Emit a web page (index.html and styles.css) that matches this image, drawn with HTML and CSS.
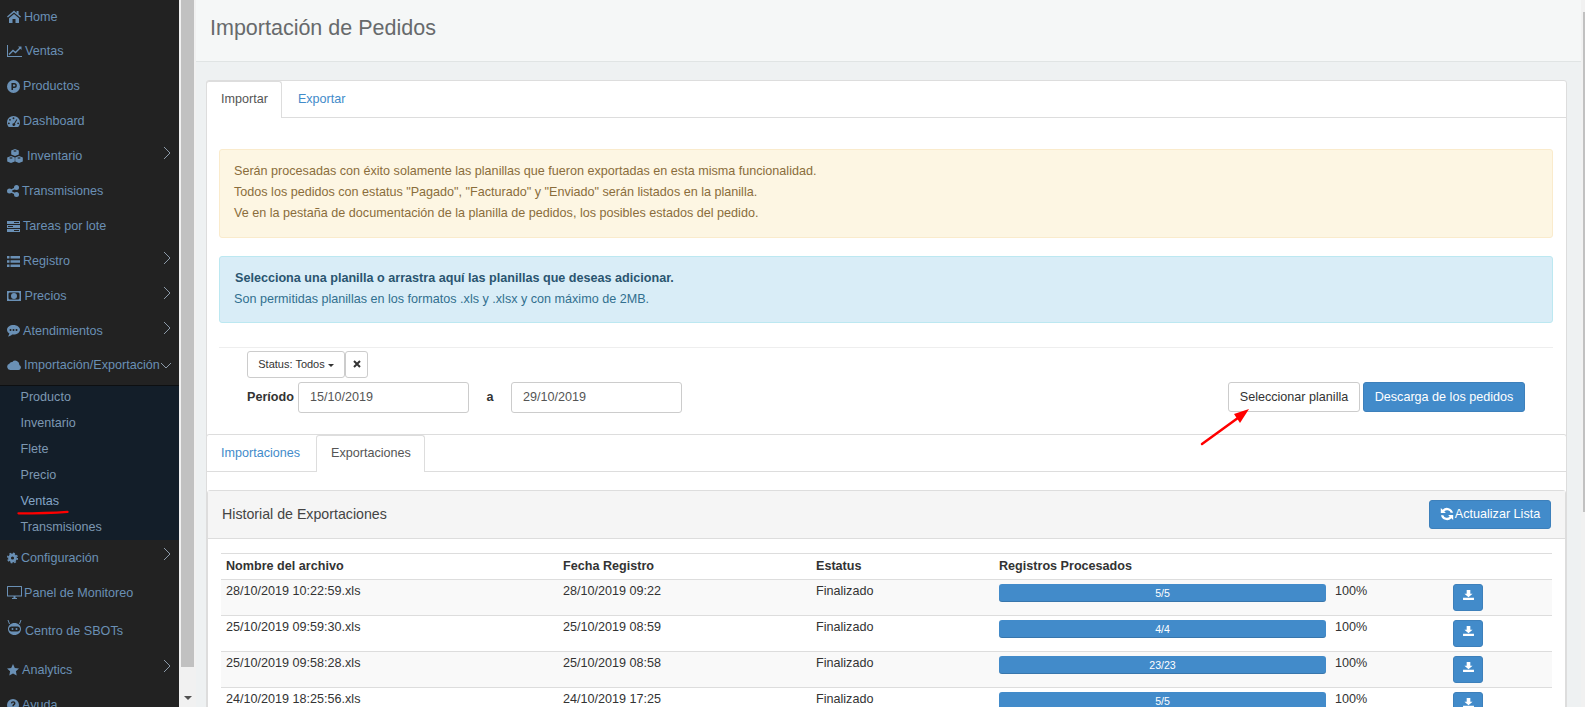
FILE: index.html
```html
<!DOCTYPE html>
<html lang="es">
<head>
<meta charset="utf-8">
<title>Importación de Pedidos</title>
<link rel="stylesheet" href="styles.css">
</head>
<body>
<nav class="sidebar">
  <a class="item item-first"><svg class="ico" width="14" height="13" viewBox="0 0 14 13"><path d="M7 .5 0 6.600l.9 1L7 2.400l6.100 5.200.9-1-2.400-2.100V1h-2v1.900zM2 8.200 7 3.900l5 4.300V13H8.500V9h-3v4H2z"/></svg><span>Home</span></a>
  <a class="item"><svg class="ico" width="15" height="12" viewBox="0 0 15 12"><path d="M0 0h1v11h14v1H0z"/><path class="line" d="M2 9.500 6 5.500l2.500 2L13.500 2.500"/><path d="M11 1.500h3.500V5z"/></svg><span>Ventas</span></a>
  <a class="item"><svg class="ico" width="13" height="13" viewBox="0 0 14 14"><path fill-rule="evenodd" d="M7 0a7 7 0 1 0 0 14A7 7 0 0 0 7 0zM4.800 3.300h3.100a2.700 2.700 0 0 1 0 5.400H6.500v2.100H4.800zm1.700 1.600v2.200h1.400a1.100 1.100 0 0 0 0-2.200z"/></svg><span>Productos</span></a>
  <a class="item"><svg class="ico" width="13" height="13" viewBox="0 0 14 14"><path fill-rule="evenodd" d="M7 1a7 7 0 0 0-7 7c0 1.900.7 3.600 1.900 4.900h10.200A7 7 0 0 0 14 8a7 7 0 0 0-7-7zM7 2.500a1 1 0 1 1 0 2 1 1 0 0 1 0-2zM3.200 4.200a1 1 0 1 1 0 2 1 1 0 0 1 0-2zM2 8a1 1 0 1 1 0 2 1 1 0 0 1 0-2zm10 0a1 1 0 1 1 0 2 1 1 0 0 1 0-2zM10.200 4.500l.9.500-2.600 4.300a1.500 1.500 0 1 1-.9-.500z"/></svg><span>Dashboard</span></a>
  <a class="item"><svg class="ico" width="16" height="15" viewBox="0 0 16 15"><path fill-rule="evenodd" d="M8 0l3.800 1.400v4.200L8 7 4.200 5.600V1.400zM8 1.300 6 2l2 .8 2-.8zM4 7l3.800 1.400v4.200L4 14 .2 12.600V8.400zM4 8.300 2 9l2 .8L6 9zM12 7l3.800 1.400v4.200L12 14l-3.800-1.400V8.400zM12 8.300 10 9l2 .8 2-.8z"/></svg><span class="t1">Inventario</span><svg class="chev" width="8" height="14" viewBox="0 0 8 14"><path d="M1 1l6 6-6 6"/></svg></a>
  <a class="item"><svg class="ico" width="12" height="12" viewBox="0 0 12 12"><circle cx="2.500" cy="6" r="2.500"/><circle cx="9.500" cy="2.500" r="2.500"/><circle cx="9.500" cy="9.500" r="2.500"/><path class="line" d="M9.500 2.500 2.500 6l7 3.500"/></svg><span>Transmisiones</span></a>
  <a class="item"><svg class="ico" width="13" height="11" viewBox="0 0 13 11"><path d="M0 0h13v3H0zM0 4h13v3H0zM0 8h13v3H0z"/><path class="dim" d="M7 1h5v1H7zM1 5h5v1H1zM7 9h5v1H7z"/></svg><span>Tareas por lote</span></a>
  <a class="item"><svg class="ico" width="13" height="11" viewBox="0 0 13 11"><path d="M0 0h2.500v2.500H0zM0 4.250h2.500v2.500H0zM0 8.500h2.500V11H0zM3.500 0H13v2.400H3.500zM3.500 4.300H13v2.400H3.500zM3.500 8.600H13V11H3.500z"/></svg><span>Registro</span><svg class="chev" width="8" height="14" viewBox="0 0 8 14"><path d="M1 1l6 6-6 6"/></svg></a>
  <a class="item"><svg class="ico" width="14" height="10" viewBox="0 0 14 10"><path fill-rule="evenodd" d="M0 0h14v10H0zM2.500 1.500 1.500 2.500v5l1 1h9l1-1v-5l-1-1zM7 2a3 3 0 1 1 0 6 3 3 0 0 1 0-6z"/></svg><span class="t0b">Precios</span><svg class="chev" width="8" height="14" viewBox="0 0 8 14"><path d="M1 1l6 6-6 6"/></svg></a>
  <a class="item"><svg class="ico" width="13" height="12" viewBox="0 0 13 12"><path fill-rule="evenodd" d="M6.500 0C2.900 0 0 2.100 0 4.800c0 1.500.9 2.900 2.400 3.800-.2.900-.8 2-1.400 2.900 1.700-.2 3.100-1.100 4.100-2 .5.100.9.100 1.400.100 3.600 0 6.500-2.200 6.500-4.800S10.100 0 6.500 0zM3.500 4a1 1 0 1 1 0 2 1 1 0 0 1 0-2zm3 0a1 1 0 1 1 0 2 1 1 0 0 1 0-2zm3 0a1 1 0 1 1 0 2 1 1 0 0 1 0-2z"/></svg><span>Atendimientos</span><svg class="chev" width="8" height="14" viewBox="0 0 8 14"><path d="M1 1l6 6-6 6"/></svg></a>
  <a class="item item-open"><svg class="ico" width="14" height="10" viewBox="0 0 14 10"><path d="M3.200 10A3.200 3.200 0 0 1 2.300 3.800 3 3 0 0 1 5.300 2 4 4 0 0 1 12.300 5 2.600 2.600 0 0 1 11.200 10z"/></svg><span>Importación/Exportación</span><svg class="chev chev-down" width="12" height="7" viewBox="0 0 12 7"><path d="M1 1l5 5 5-5"/></svg></a>
  <div class="submenu">
    <a class="sub">Producto</a>
    <a class="sub">Inventario</a>
    <a class="sub">Flete</a>
    <a class="sub">Precio</a>
    <a class="sub sub-on">Ventas<svg class="underline" width="52" height="5" viewBox="0 0 52 5"><path d="M1.500 3.300C18 3.300 34 3 50.500 1.800"/></svg></a>
    <a class="sub">Transmisiones</a>
  </div>
  <a class="item"><svg class="ico" width="11" height="12" viewBox="0 0 12 12"><circle class="teeth" cx="6" cy="6" r="5.200"/><path fill-rule="evenodd" d="M6 1.200a4.800 4.800 0 1 1 0 9.600 4.800 4.800 0 0 1 0-9.600zM6 4.300a1.700 1.700 0 1 0 0 3.400 1.700 1.700 0 0 0 0-3.400z"/></svg><span>Configuración</span><svg class="chev" width="8" height="14" viewBox="0 0 8 14"><path d="M1 1l6 6-6 6"/></svg></a>
  <a class="item"><svg class="ico" width="15" height="13" viewBox="0 0 15 13"><path fill-rule="evenodd" d="M0 .500A.5.5 0 0 1 .5 0h14a.5.5 0 0 1 .5.500V10a.5.5 0 0 1-.5.500H.5A.5.5 0 0 1 0 10zM1 1v8.500h13V1zM6.500 10.500h2v1.500h1.500v1H5v-1h1.500z"/></svg><span class="t2">Panel de Monitoreo</span></a>
  <a class="item item-tall"><svg class="ico robot" width="15" height="16" viewBox="0 0 15 16"><path class="line thin" d="M1 0 2.500 4M14 0 12.500 4"/><path fill-rule="evenodd" d="M7.500 3C3.900 3 1 5.600 1 9s2.900 6 6.500 6 6.500-2.600 6.500-6-2.900-6-6.500-6zM4.500 6.500h6c1.400 0 2.500 1.100 2.500 2.500s-1.100 2.500-2.500 2.500h-6C3.100 11.500 2 10.400 2 9s1.100-2.500 2.500-2.500z"/><circle cx="5.500" cy="9" r="1"/><circle cx="9.500" cy="9" r="1"/></svg><span>Centro de SBOTs</span></a>
  <a class="item"><svg class="ico" width="12" height="12" viewBox="0 0 12 12"><path d="M6 0l1.800 3.900 4.200.5-3.100 2.900.8 4.200L6 9.400l-3.700 2.100.8-4.200L0 4.400l4.200-.5z"/></svg><span>Analytics</span><svg class="chev" width="8" height="14" viewBox="0 0 8 14"><path d="M1 1l6 6-6 6"/></svg></a>
  <a class="item"><svg class="ico" width="12" height="12" viewBox="0 0 12 12"><path fill-rule="evenodd" d="M6 0a6 6 0 1 0 0 12A6 6 0 0 0 6 0zM3.800 4.300C4 3 5 2.300 6.200 2.300c1.300 0 2.300.9 2.300 2 0 1.900-1.700 1.700-1.700 3H5.300c0-2.100 1.700-2 1.700-3 0-.5-.4-.8-.9-.8-.5 0-.9.300-1 .9zM5.300 8h1.500v1.500H5.300z"/></svg><span>Ayuda</span></a>
</nav>
<div class="scroll-side"><div class="thumb"></div><div class="scroll-arrow"></div></div>

<main class="main">
  <header class="page-head"><h1>Importación de Pedidos</h1></header>
  <div class="page-body">
    <section class="panel">
      <div class="tabs">
        <a class="tab tab-on tab-first">Importar</a>
        <a class="tab tab-after">Exportar</a>
      </div>
      <div class="tab-body">
        <div class="alert alert-warn">
          <p>Serán procesadas con éxito solamente las planillas que fueron exportadas en esta misma funcionalidad.</p>
          <p>Todos los pedidos con estatus "Pagado", "Facturado" y "Enviado" serán listados en la planilla.</p>
          <p>Ve en la pestaña de documentación de la planilla de pedidos, los posibles estados del pedido.</p>
        </div>
        <div class="alert alert-info">
          <p><strong>Selecciona una planilla o arrastra aquí las planillas que deseas adicionar.</strong></p>
          <p>Son permitidas planillas en los formatos .xls y .xlsx y con máximo de 2MB.</p>
        </div>
        <hr class="rule">
        <div class="filters">
          <div class="status-row">
            <button class="btn btn-xs">Status: <span class="status-val">Todos</span><i class="caret"></i></button>
            <button class="btn btn-x"><svg width="8" height="8" viewBox="0 0 8 8"><path d="M1 1l6 6M7 1 1 7"/></svg></button>
          </div>
          <div class="period-row">
            <label class="lbl">Período</label>
            <input class="date" value="15/10/2019" readonly>
            <span class="sep">a</span>
            <input class="date" value="29/10/2019" readonly>
            <div class="actions">
              <button class="btn btn-default">Seleccionar planilla<svg class="arrow" width="60" height="42" viewBox="0 0 60 42"><path class="arrow-shaft" d="M6 38 46 9"/><path class="arrow-head" d="M53 3 38 8l6 9z"/></svg></button>
              <button class="btn btn-primary">Descarga de los pedidos</button>
            </div>
          </div>
        </div>
      </div>
      <section class="panel inner">
        <div class="tabs">
          <a class="tab tab-plain">Importaciones</a>
          <a class="tab tab-on tab-second">Exportaciones</a>
        </div>
        <div class="history">
          <div class="history-head">
            <span class="history-title">Historial de Exportaciones</span>
            <button class="btn btn-primary btn-refresh"><svg width="14" height="14" viewBox="0 0 14 14"><path d="M13 5.800h-2.300a3.800 3.800 0 0 0-6.400-1.300L5.900 6.100H.8V1l1.800 1.800a6.100 6.100 0 0 1 10.400 3zM1 8.200h2.300a3.800 3.800 0 0 0 6.400 1.300L8.100 7.900h5.100V13l-1.800-1.800A6.100 6.100 0 0 1 1 8.200z"/></svg>Actualizar Lista</button>
          </div>
          <div class="history-body">
            <table class="grid">
              <thead>
                <tr><th class="c1">Nombre del archivo</th><th class="c2">Fecha Registro</th><th class="c3">Estatus</th><th class="c4">Registros Procesados</th><th class="c5"></th><th class="c6"></th></tr>
              </thead>
              <tbody>
                <tr><td>28/10/2019 10:22:59.xls</td><td>28/10/2019 09:22</td><td>Finalizado</td><td><div class="bar">5/5</div></td><td class="pct">100%</td><td><button class="btn-dl"><svg width="11" height="10" viewBox="0 0 12 11"><path d="M4 0h4v4h2.500L6 8 1.500 4H4zM0 8.500h12V11H0z"/></svg></button></td></tr>
                <tr><td>25/10/2019 09:59:30.xls</td><td>25/10/2019 08:59</td><td>Finalizado</td><td><div class="bar">4/4</div></td><td class="pct">100%</td><td><button class="btn-dl"><svg width="11" height="10" viewBox="0 0 12 11"><path d="M4 0h4v4h2.500L6 8 1.500 4H4zM0 8.500h12V11H0z"/></svg></button></td></tr>
                <tr><td>25/10/2019 09:58:28.xls</td><td>25/10/2019 08:58</td><td>Finalizado</td><td><div class="bar">23/23</div></td><td class="pct">100%</td><td><button class="btn-dl"><svg width="11" height="10" viewBox="0 0 12 11"><path d="M4 0h4v4h2.500L6 8 1.500 4H4zM0 8.500h12V11H0z"/></svg></button></td></tr>
                <tr><td>24/10/2019 18:25:56.xls</td><td>24/10/2019 17:25</td><td>Finalizado</td><td><div class="bar">5/5</div></td><td class="pct">100%</td><td><button class="btn-dl"><svg width="11" height="10" viewBox="0 0 12 11"><path d="M4 0h4v4h2.500L6 8 1.500 4H4zM0 8.500h12V11H0z"/></svg></button></td></tr>
              </tbody>
            </table>
          </div>
        </div>
      </section>
    </section>
  </div>
</main>
<div class="scroll-page"><div class="page-thumb"></div></div>
</body>
</html>
```
FILE: styles.css
```css
* { box-sizing: border-box; }
html, body { height: 707px; margin: 0; overflow: hidden; }
body {
  display: flex;
  font-family: "Liberation Sans", Arial, sans-serif;
  font-size: 12.6px;
  line-height: 18px;
  color: #333;
  background: #eef1f2;
}
p { margin: 0; }

/* Sidebar */
.sidebar { width: 179px; height: 707px; flex: none; background: #222; overflow: hidden; color: #6a90b5; }
.item { display: flex; align-items: center; gap: 3px; height: 35px; padding: 0 8px 0 7px; white-space: nowrap; }
.item-first { height: 33.5px; }
.item-open { height: 36.5px; padding-bottom: 3px; }
.item-tall { height: 42px; }
.ico { flex: none; fill: currentColor; }
.ico .line { fill: none; stroke: currentColor; stroke-width: 1.4; }
.ico .thin { stroke-width: 1; }
.ico .dim { fill: #222; }
.ico .teeth { fill: none; stroke: currentColor; stroke-width: 1.700; stroke-dasharray: 2 2.080; }
.robot { margin-top: -6px; }
.t0b { margin-left: .5px; }
.t1 { margin-left: 1px; }
.t2 { margin-left: -1px; }
.chev { flex: none; margin-left: auto; margin-bottom: 7px; fill: none; stroke: #8c9aa8; stroke-width: 1; }
.chev-down { margin-bottom: 0; margin-left: -3px; }
.submenu { background: #131e29; box-shadow: inset 0 1px 0 #0d0f11; padding: 0; }
.sub { position: relative; display: block; height: 26px; line-height: 25px; padding-left: 20.5px; color: #7d98b2; }
.sub:last-child { height: 25px; }
.sub-on { color: #84a5c6; }
.underline { position: absolute; left: 17px; top: 21px; fill: none; stroke: #f00; stroke-width: 2.300; stroke-linecap: round; }

/* Scrollbars */
.scroll-side { width: 17px; flex: none; background: #f1f1f1; display: flex; flex-direction: column; align-items: center; justify-content: space-between; padding-bottom: 7px; }
.thumb { width: 13px; height: 667px; background: #c1c1c1; }
.scroll-arrow { width: 0; height: 0; border-left: 4px solid transparent; border-right: 4px solid transparent; border-top: 4px solid #505050; }
.scroll-page { width: 4px; flex: none; background: #f1f1f1; padding: 12px 0 0 2px; }
.page-thumb { width: 2px; height: 500px; background: #c1c1c1; }

/* Main */
.main { flex: 1; min-width: 0; height: 707px; overflow: hidden; }
.page-head { height: 62px; background: #f5f7f7; border-bottom: 1px solid #e0e4e4; padding: 16px 0 0 14px; }
h1 { margin: 0; font-size: 21.5px; font-weight: 400; line-height: 24px; color: #676a6c; }
.page-body { padding: 18px 14px 0 10px; }
.panel { background: #fff; border: 1px solid #ddd; border-radius: 3px; }
.inner { margin: 0 -1px; }

.tabs { display: flex; height: 37px; border-bottom: 1px solid #ddd; }
.tab { height: 37px; padding: 0 14px; line-height: 35px; color: #428bca; border: 1px solid transparent; border-bottom: 0; }
.tab-after { padding-left: 15px; }
.tab-plain { padding: 0 15px 0 13px; }
.tab-second { padding: 0 13px 0 14px; }
.tab-on { color: #555; background: #fff; border-color: #ddd; border-radius: 3px 3px 0 0; }
.tab-first { margin-left: -1px; padding: 0 13px 0 14px; border-left-color: #ddd; }

.tab-body { padding: 31px 13px 21px 12px; }
.alert { border: 1px solid; border-radius: 3px; line-height: 21.42px; padding: 10.5px 14px 12px; }
.alert-warn { background: #fdf6e3; border-color: #faebcc; color: #8a6d3b; margin-bottom: 18px; }
.alert-info { background: #d9edf7; border-color: #bce8f1; color: #31708f; padding: 11px 14px; }
.alert-info strong { margin-left: 1px; color: #2a5570; }
.rule { height: 1px; border: 0; background: #eee; margin: 24px 0 3px; }

.filters { padding: 0 28px; }
.status-row { display: flex; }
.btn { font: inherit; border: 1px solid #ccc; border-radius: 3px; background: #fff; color: #333; padding: 0; }
.btn-xs { width: 98px; height: 27px; font-size: 11px; }
.status-val { color: #333; }
.caret { display: inline-block; width: 0; height: 0; margin-left: 3px; vertical-align: middle; border-left: 3.500px solid transparent; border-right: 3.500px solid transparent; border-top: 3.500px solid #333; }
.btn-x { width: 23px; height: 27px; }
.btn-x svg { fill: none; stroke: #333; stroke-width: 2; display: block; margin: auto; }
.period-row { display: flex; align-items: center; margin-top: 4px; height: 31px; }
.lbl { font-weight: 700; width: 51px; }
.date { width: 171px; height: 31px; border: 1px solid #ccc; border-radius: 3px; padding: 0 11px; font: inherit; color: #555; background: #fff; outline: 0; }
.sep { width: 42px; text-align: center; font-weight: 700; }
.actions { margin-left: auto; display: flex; gap: 3px; align-items: center; }
.btn-default { position: relative; width: 132px; height: 30px; }
.btn-primary { background: #428bca; border-color: #3d80bb; color: #fff; }
.actions .btn-primary { width: 162px; height: 30px; }
.arrow { position: absolute; left: -33px; top: 23px; overflow: visible; }
.arrow-shaft { fill: none; stroke: #f00; stroke-width: 2.500; stroke-linecap: round; }
.arrow-head { fill: #f00; }

/* History */
.history { margin-top: 18px; border: 1px solid #ddd; border-radius: 3px; }
.history-head { display: flex; align-items: center; justify-content: space-between; height: 48px; padding: 0 14px; background: #f5f5f5; border-bottom: 1px solid #ddd; }
.history-title { font-size: 14.2px; color: #444; }
.btn-refresh { width: 122px; height: 29px; display: flex; align-items: center; justify-content: center; gap: 1px; }
.btn-refresh svg { fill: #fff; }
.history-body { padding: 14px 13px 0 13px; }
.grid { width: 100%; table-layout: fixed; border-collapse: collapse; }
.grid th { height: 26px; padding: 0 5px 1px; text-align: left; border-top: 1px solid #ddd; line-height: 14px; }
.c1 { width: 337px; }
.c2 { width: 253px; }
.c3 { width: 183px; }
.c4 { width: 337px; }
.c5 { width: 117px; }
.grid td { height: 36px; padding: 4px 5px 0; vertical-align: top; border-top: 1px solid #ddd; line-height: 14px; }
.grid .pct { padding-left: 4px; }
.grid tbody tr:nth-child(odd) td { background: #f9f9f9; }
.bar { height: 18px; line-height: 18px; border-radius: 3px; background: #428bca; box-shadow: inset 0 -1px 0 rgba(0,0,0,.15); color: #fff; text-align: center; font-size: 10.6px; }
.btn-dl { width: 30px; height: 27px; padding: 0 0 4px; border: 1px solid #3d80bb; border-radius: 3px; background: #428bca; display: flex; align-items: center; justify-content: center; }
.btn-dl svg { fill: #fff; }
```
